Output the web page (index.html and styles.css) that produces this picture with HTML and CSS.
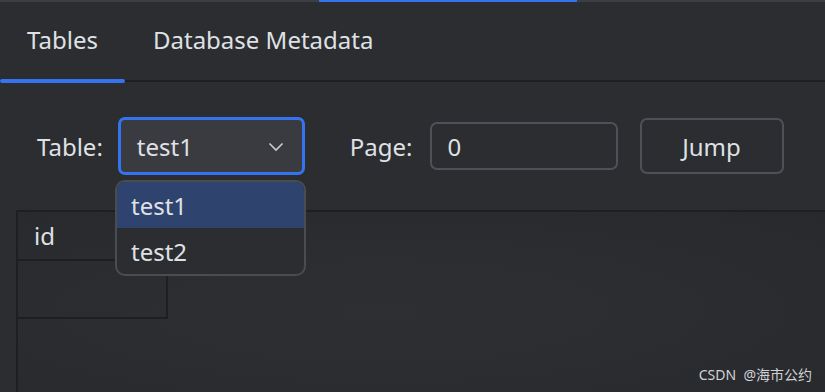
FILE: index.html
```html
<!DOCTYPE html>
<html>
<head>
<meta charset="utf-8">
<link rel="stylesheet" href="styles.css">
</head>
<body>
<div class="app">
  <div class="topbar"><div class="topbar-spacer"></div><div class="topbar-active"></div></div>
  <div class="tabs">
    <div class="tab active">Tables</div>
    <div class="tab">Database Metadata</div>
  </div>
  <div class="toolbar">
    <span class="label">Table:</span>
    <div class="select">
      <span>test1</span>
      <svg class="chev" width="16" height="10" viewBox="0 0 16 10"><path d="M1.5 1.5 L8 8 L14.5 1.5" fill="none" stroke="#c9ccd1" stroke-width="1.6"/></svg>
    </div>
    <span class="label page-label">Page:</span>
    <div class="input">0</div>
    <button class="btn">Jump</button>
  </div>
  <div class="table-area">
    <div class="grid">
      <div class="th">id</div>
      <div class="td"></div>
    </div>
  </div>
  <div class="popup">
    <div class="opt selected">test1</div>
    <div class="opt">test2</div>
  </div>
  <div class="watermark">CSDN&nbsp; @海市公约</div>
</div>
</body>
</html>
```
FILE: styles.css
```css
* { box-sizing: border-box; }
html, body { margin: 0; padding: 0; }
body {
  width: 825px;
  height: 392px;
  overflow: hidden;
  background: #2b2d30;
  color: #dfe1e5;
  font-family: "Noto Sans", "Open Sans", "Noto Sans CJK SC", sans-serif;
}
.app {
  position: relative;
  width: 825px;
  height: 392px;
  display: flex;
  flex-direction: column;
}
.topbar {
  height: 2px;
  background: #3c3e43;
  display: flex;
}
.topbar-spacer { width: 319px; }
.topbar-active { width: 258px; background: #3574f0; }
.tabs {
  height: 80px;
  display: flex;
  border-bottom: 2px solid #1e1f22;
}
.tab {
  position: relative;
  font-size: 24px;
  line-height: 1;
  padding: 26px 26px 0;
  height: 78px;
}
.tab.active {
  width: 125px;
  text-align: center;
  padding-left: 0;
  padding-right: 0;
}
.tab.active::after {
  content: "";
  position: absolute;
  left: 0;
  right: 0;
  bottom: -3px;
  height: 4px;
  border-radius: 2px;
  background: #3574f0;
}
.tab + .tab { padding-left: 28px; }
.toolbar {
  height: 128px;
  display: flex;
  align-items: center;
  padding-left: 37px;
}
.label {
  font-size: 24px;
  margin-right: 15px;
}
.select {
  width: 187px;
  height: 58px;
  border: 3px solid #3574f0;
  border-radius: 7px;
  background: #393b40;
  display: flex;
  align-items: center;
  justify-content: space-between;
  padding: 0 18px 0 16px;
  font-size: 24px;
}
.chev { margin-top: 2px; }
.page-label { margin-left: 45px; margin-right: 17px; }
.input {
  width: 188px;
  height: 48px;
  border: 2px solid #4e5157;
  border-radius: 7px;
  display: flex;
  align-items: center;
  padding-left: 16px;
  font-size: 24px;
}
.btn {
  margin-left: 22px;
  width: 144px;
  height: 56px;
  border: 2px solid #4e5157;
  border-radius: 7px;
  background: transparent;
  color: #dfe1e5;
  font-family: inherit;
  font-size: 24px;
  padding: 0;
}
.table-area {
  flex: 1;
  margin-left: 16px;
  border-top: 2px solid #1e1f22;
  border-left: 2px solid #1e1f22;
  background: radial-gradient(ellipse at 45% 55%, #2d2f33 0%, #2a2c2f 60%, #28292d 100%);
}
.grid {
  width: 150px;
}
.th {
  height: 49px;
  border-bottom: 2px solid #1e1f22;
  font-size: 24px;
  padding-left: 16px;
  display: flex;
  align-items: center;
}
.td {
  height: 58px;
  border-right: 2px solid #1e1f22;
  border-bottom: 2px solid #1e1f22;
}
.popup {
  position: absolute;
  left: 115px;
  top: 180px;
  width: 191px;
  height: 96px;
  border: 2px solid #4a4c52;
  border-radius: 10px;
  background: #2b2d30;
  overflow: hidden;
}
.opt {
  height: 46px;
  display: flex;
  align-items: center;
  padding-left: 14px;
  font-size: 24px;
}
.opt.selected { background: #2e436e; }
.watermark {
  position: absolute;
  right: 13px;
  bottom: 8px;
  font-size: 14px;
  color: #d0d2d6;
}
```
